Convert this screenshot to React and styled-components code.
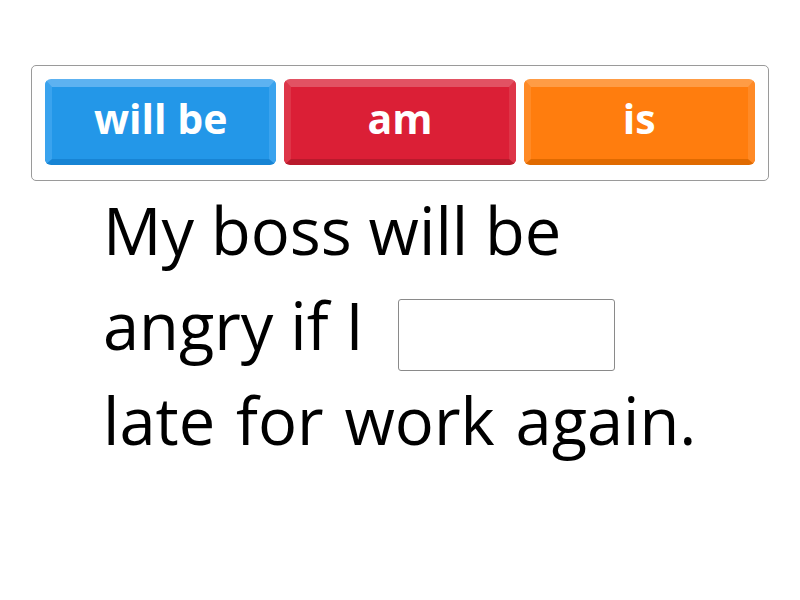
import React from "react";
import styled, { createGlobalStyle } from "styled-components";

const Global = createGlobalStyle`
  html, body { margin: 0; padding: 0; background: #fff; }
  body { font-family: "Open Sans", "Noto Sans", sans-serif; }
`;

const Page = styled.div`
  width: 800px;
  height: 600px;
  padding-top: 65px;
  box-sizing: border-box;
`;

const Tray = styled.div`
  margin: 0 31px;
  height: 116px;
  box-sizing: border-box;
  border: 1px solid #9a9a9a;
  border-radius: 5px;
  padding: 13px;
  display: grid;
  grid-template-columns: repeat(3, 1fr);
  gap: 8px;
`;

const palette = {
  blue: { face: "#2397e8", top: "#5db2f1", side: "#3aa3ee", bottom: "#1784d4" },
  red: { face: "#db1f36", top: "#e25263", side: "#de3548", bottom: "#b91a2c" },
  orange: { face: "#ff7d0e", top: "#ff9c45", side: "#ff8a26", bottom: "#e06a00" },
};

const Tile = styled.div`
  box-sizing: border-box;
  height: 86px;
  border-radius: 6px;
  border-style: solid;
  border-width: 8px 7px 6px 7px;
  border-color: ${(p) => palette[p.$c].top} ${(p) => palette[p.$c].side}
    ${(p) => palette[p.$c].bottom} ${(p) => palette[p.$c].side};
  background: ${(p) => palette[p.$c].face};
  color: #fff;
  font-weight: 700;
  font-size: 41px;
  display: flex;
  align-items: center;
  justify-content: center;
  line-height: 1;
  padding-bottom: 9px;
`;

const Sentence = styled.div`
  padding-left: 103px;
  margin-top: 2px;
  font-size: 65px;
  line-height: 95px;
  color: #000;
`;

const Line = styled.div`
  display: flex;
  align-items: center;
  white-space: pre;
  height: 95px;
  word-spacing: ${(p) => p.$ws || 0}px;
`;

const Blank = styled.div`
  width: 217px;
  height: 72px;
  box-sizing: border-box;
  border: 1px solid #8a8a8a;
  border-radius: 3px;
  margin-left: 34px;
  align-self: flex-start;
  margin-top: 21px;
`;

export default function App() {
  return (
    <Page>
      <Global />
      <Tray>
        <Tile $c="blue">will be</Tile>
        <Tile $c="red">am</Tile>
        <Tile $c="orange">is</Tile>
      </Tray>
      <Sentence>
        <Line>My boss will be</Line>
        <Line>
          angry if I<Blank />
        </Line>
        <Line $ws={4}>late for work again.</Line>
      </Sentence>
    </Page>
  );
}
